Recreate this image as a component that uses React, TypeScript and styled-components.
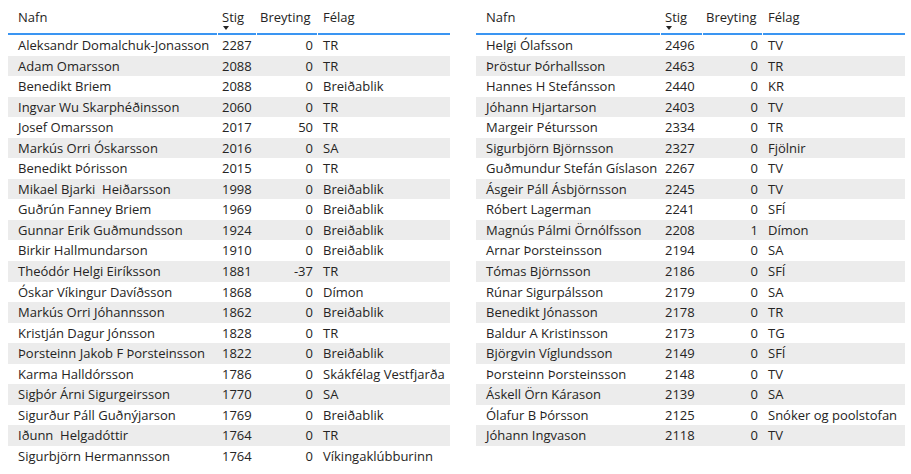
import React from "react";
import styled, { createGlobalStyle } from "styled-components";

const GlobalStyle = createGlobalStyle`
  html, body { margin: 0; padding: 0; background: #ffffff; }
  body { font-family: "Open Sans", "Noto Sans", sans-serif; color: #252423; }
`;

type Row = [string, number, number, string];

const left: Row[] = [
  ["Aleksandr Domalchuk-Jonasson", 2287, 0, "TR"],
  ["Adam Omarsson", 2088, 0, "TR"],
  ["Benedikt Briem", 2088, 0, "Breiðablik"],
  ["Ingvar Wu Skarphéðinsson", 2060, 0, "TR"],
  ["Josef Omarsson", 2017, 50, "TR"],
  ["Markús Orri Óskarsson", 2016, 0, "SA"],
  ["Benedikt Þórisson", 2015, 0, "TR"],
  ["Mikael Bjarki  Heiðarsson", 1998, 0, "Breiðablik"],
  ["Guðrún Fanney Briem", 1969, 0, "Breiðablik"],
  ["Gunnar Erik Guðmundsson", 1924, 0, "Breiðablik"],
  ["Birkir Hallmundarson", 1910, 0, "Breiðablik"],
  ["Theódór Helgi Eiríksson", 1881, -37, "TR"],
  ["Óskar Víkingur Davíðsson", 1868, 0, "Dímon"],
  ["Markús Orri Jóhannsson", 1862, 0, "Breiðablik"],
  ["Kristján Dagur Jónsson", 1828, 0, "TR"],
  ["Þorsteinn Jakob F Þorsteinsson", 1822, 0, "Breiðablik"],
  ["Karma Halldórsson", 1786, 0, "Skákfélag Vestfjarða"],
  ["Sigþór Árni Sigurgeirsson", 1770, 0, "SA"],
  ["Sigurður Páll Guðnýjarson", 1769, 0, "Breiðablik"],
  ["Iðunn  Helgadóttir", 1764, 0, "TR"],
  ["Sigurbjörn Hermannsson", 1764, 0, "Víkingaklúbburinn"],
];

const right: Row[] = [
  ["Helgi Ólafsson", 2496, 0, "TV"],
  ["Þröstur Þórhallsson", 2463, 0, "TR"],
  ["Hannes H Stefánsson", 2440, 0, "KR"],
  ["Jóhann Hjartarson", 2403, 0, "TV"],
  ["Margeir Pétursson", 2334, 0, "TR"],
  ["Sigurbjörn Björnsson", 2327, 0, "Fjölnir"],
  ["Guðmundur Stefán Gíslason", 2267, 0, "TV"],
  ["Ásgeir Páll Ásbjörnsson", 2245, 0, "TV"],
  ["Róbert Lagerman", 2241, 0, "SFÍ"],
  ["Magnús Pálmi Örnólfsson", 2208, 1, "Dímon"],
  ["Arnar Þorsteinsson", 2194, 0, "SA"],
  ["Tómas Björnsson", 2186, 0, "SFÍ"],
  ["Rúnar Sigurpálsson", 2179, 0, "SA"],
  ["Benedikt Jónasson", 2178, 0, "TR"],
  ["Baldur A Kristinsson", 2173, 0, "TG"],
  ["Björgvin Víglundsson", 2149, 0, "SFÍ"],
  ["Þorsteinn Þorsteinsson", 2148, 0, "TV"],
  ["Áskell Örn Kárason", 2139, 0, "SA"],
  ["Ólafur B Þórsson", 2125, 0, "Snóker og poolstofan"],
  ["Jóhann Ingvason", 2118, 0, "TV"],
];

const Page = styled.div`
  display: flex;
  align-items: flex-start;
  padding-left: 8px;
  gap: 26px;
  width: 911px;
  height: 474px;
  box-sizing: border-box;
  overflow: hidden;
`;

const Table = styled.div<{ $cols: string; $width: number }>`
  width: ${(p) => p.$width}px;
  display: grid;
  grid-template-columns: ${(p) => p.$cols};
  font-size: 13px;
  line-height: 18px;
`;

const HeaderCell = styled.div<{ $first?: boolean; $pl?: number; $last?: boolean }>`
  position: relative;
  height: 35px;
  box-sizing: border-box;
  padding-top: 8px;
  padding-left: ${(p) => (p.$first ? 10 : p.$pl ?? 4)}px;
  white-space: nowrap;

  &::after {
    content: "";
    position: absolute;
    left: 0;
    right: ${(p) => (p.$last ? 0 : 1)}px;
    bottom: 0;
    height: 2px;
    background: #3a95f2;
  }
`;

const SortArrow = styled.span`
  position: absolute;
  left: 5px;
  top: 26px;
  width: 0;
  height: 0;
  border-left: 3.5px solid transparent;
  border-right: 3.5px solid transparent;
  border-top: 4px solid #252423;
`;

const Cell = styled.div<{ $alt: boolean; $first?: boolean; $num?: boolean; $pl?: number }>`
  height: 20.55px;
  box-sizing: border-box;
  padding-top: 1px;
  padding-left: ${(p) => (p.$first ? 10 : p.$pl ?? 4)}px;
  padding-right: ${(p) => (p.$num ? 5 : 0)}px;
  text-align: ${(p) => (p.$num ? "right" : "left")};
  background: ${(p) => (p.$alt ? "#ececec" : "#ffffff")};
  white-space: pre;
  overflow: hidden;
`;

function DataTable({ rows, cols, width }: { rows: Row[]; cols: string; width: number }) {
  return (
    <Table $cols={cols} $width={width}>
      <HeaderCell $first>Nafn</HeaderCell>
      <HeaderCell>
        Stig
        <SortArrow />
      </HeaderCell>
      <HeaderCell $pl={3}>Breyting</HeaderCell>
      <HeaderCell $pl={5} $last>Félag</HeaderCell>
      {rows.map((r, i) => (
        <React.Fragment key={i}>
          <Cell $alt={i % 2 === 1} $first>{r[0]}</Cell>
          <Cell $alt={i % 2 === 1}>{r[1]}</Cell>
          <Cell $alt={i % 2 === 1} $num>{r[2]}</Cell>
          <Cell $alt={i % 2 === 1} $pl={5}>{r[3]}</Cell>
        </React.Fragment>
      ))}
    </Table>
  );
}

export default function App() {
  return (
    <>
      <GlobalStyle />
      <Page>
        <DataTable rows={left} cols="210px 39px 61px 132px" width={442} />
        <DataTable rows={right} cols="185px 42px 60px 142px" width={429} />
      </Page>
    </>
  );
}
